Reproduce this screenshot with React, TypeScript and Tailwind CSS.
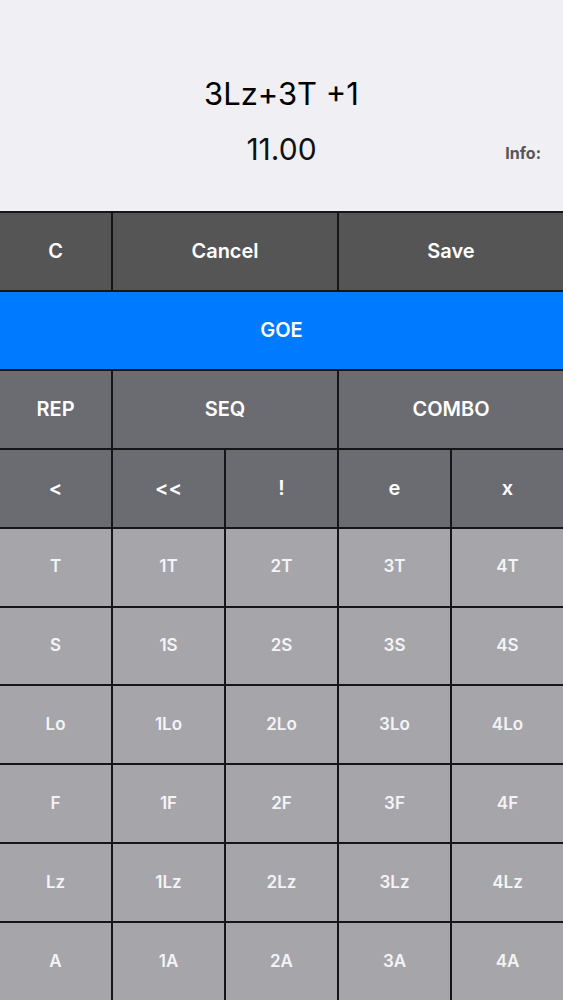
import React from "react";

type Key = { label: string; span?: number };

const font = { fontFamily: "Inter, 'Liberation Sans', sans-serif" };

const darkRow: Key[] = [{ label: "C" }, { label: "Cancel", span: 2 }, { label: "Save", span: 2 }];
const modRow: Key[] = [{ label: "REP" }, { label: "SEQ", span: 2 }, { label: "COMBO", span: 2 }];
const editRow: Key[] = ["<", "<<", "!", "e", "x"].map((label) => ({ label }));

const jumps = ["T", "S", "Lo", "F", "Lz", "A"];

export default function App() {
    return (
        <div className="flex h-[1000px] w-full flex-col bg-[#efeff4]" style={font}>
            {/* header */}
            <div className="relative h-[211px] shrink-0">
                <div className="pt-[75px] text-center text-[31px] leading-[38px] text-black">3Lz+3T +1</div>
                <div className="pt-[17px] text-center text-[30px] leading-[38px] text-[#111]">11.00</div>
                <div className="absolute right-[22px] top-[141px] text-[16px] font-bold text-[#555]">Info:</div>
            </div>

            {/* keypad */}
            <div className="grid flex-1 grid-cols-5 grid-rows-10 gap-[2px] bg-[#161618] pt-[2px]">
                {darkRow.map((k) => (
                    <Btn key={k.label} k={k} cls="bg-[#555556] text-[20px] font-semibold text-white" />
                ))}
                <div className="col-span-5 flex items-center justify-center bg-[#007aff] text-[20px] font-semibold text-white">
                    GOE
                </div>
                {modRow.map((k) => (
                    <Btn key={k.label} k={k} cls="bg-[#6b6c71] text-[20px] font-semibold text-white" />
                ))}
                {editRow.map((k) => (
                    <Btn key={k.label} k={k} cls="bg-[#6b6c71] text-[20px] font-semibold text-white" />
                ))}
                {jumps.map((j) =>
                    ["", "1", "2", "3", "4"].map((n) => (
                        <Btn
                            key={n + j}
                            k={{ label: n + j }}
                            cls="bg-[#a6a5aa] text-[17px] font-semibold text-[#f4f4f6]"
                        />
                    ))
                )}
            </div>
        </div>
    );
}

function Btn({ k, cls }: { k: Key; cls: string }) {
    return (
        <div className={`flex items-center justify-center ${k.span === 2 ? "col-span-2" : ""} ${cls}`}>
            {k.label}
        </div>
    );
}
